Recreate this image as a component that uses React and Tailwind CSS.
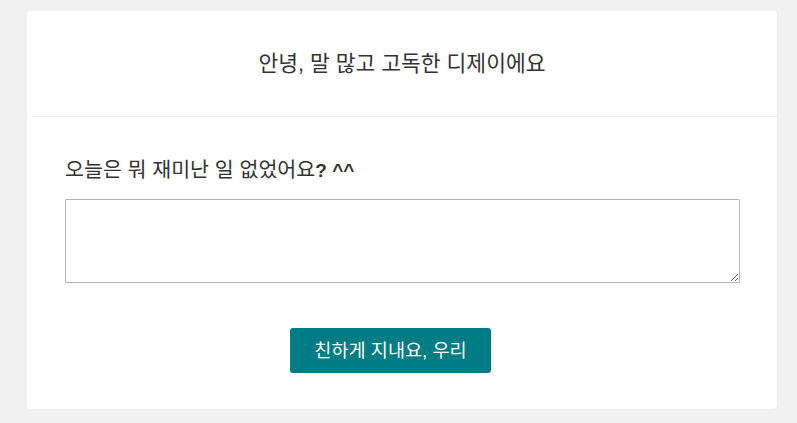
export default function App() {
  const font = { fontFamily: '"Liberation Sans", "Noto Sans CJK KR", sans-serif' };
  return (
    <div className="min-h-[423px] w-full bg-[#f1f1f1] px-[27px] pt-[11px] pb-[14px]" style={font}>
      <div className="flex w-[750px] flex-col rounded-[4px] bg-white">
        <div className="flex h-[105px] items-center justify-center">
          <h1 className="text-[21.5px] leading-[26px] text-[#333] font-normal">안녕, 말 많고 고독한 디제이에요</h1>
        </div>
        <div className="ml-[4px] h-px bg-[#eeeeee]" />
        <div className="flex flex-col px-[38px] pr-[37px] pt-[40px] pb-[36px]">
          <label className="text-[20.6px] leading-[26px] text-[#333]">
            오늘은 뭐 재미난 일 없었어요<b className="font-bold text-[19px]">? ^^</b>
          </label>
          <textarea className="mt-[15px] h-[84px] w-full resize-y rounded-[1px] border border-[#b5b5b5] bg-white outline-none" />
          <div className="mt-[45px] flex">
            <button className="ml-[225px] h-[45px] w-[201px] rounded-[3px] bg-[#007c84] text-[18.6px] leading-[22px] text-white">
              친하게 지내요, 우리
            </button>
          </div>
        </div>
      </div>
    </div>
  );
}
